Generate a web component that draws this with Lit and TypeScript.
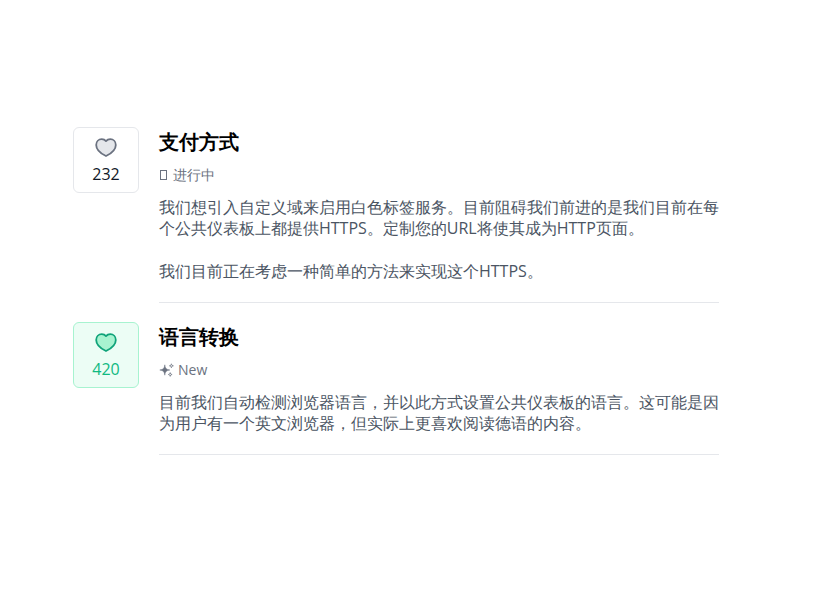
import { LitElement, html, css, svg } from "lit";
import { customElement } from "lit/decorators.js";

const heart = svg`<path d="M12 20 C 9.5 18.8 2.2 14.6 2.2 8.9 C 2.2 5.6 4.6 3.2 7.7 3.2 C 9.4 3.2 11 3.9 12 5.1 C 13 3.9 14.6 3.2 16.3 3.2 C 19.4 3.2 21.8 5.6 21.8 8.9 C 21.8 14.6 14.5 18.8 12 20 Z" stroke-width="1.8" stroke-linejoin="round"/>`;

@customElement("app-root")
export class AppRoot extends LitElement {
  static styles = css`
    :host { display: block; font-family: "Open Sans", sans-serif; background: #fff; min-height: 595px; box-sizing: border-box; padding: 127px 112px 0 73px; }
    .item { display: flex; gap: 20px; }
    .vote { flex: none; box-sizing: border-box; width: 66px; height: 66px; border: 1px solid #e5e7eb; border-radius: 6px; display: flex; flex-direction: column; align-items: center; padding-top: 8px; color: #111827; font-size: 16px; line-height: 20px; }
    .vote svg { width: 24px; height: 24px; fill: #e5e7eb; stroke: #6b7280; margin-bottom: 4px; display: block; }
    .vote.on { background: #ecfdf5; border-color: #a7f3d0; color: #10b981; }
    .vote.on svg { fill: #a7f3d0; stroke: #10a37a; }
    .body { flex: 1; border-bottom: 1px solid #e5e7eb; padding-bottom: 20px; margin-bottom: 19px; }
    h2 { margin: 0; font-size: 20px; line-height: 30px; font-weight: 700; color: #000; }
    .status { display: flex; align-items: center; gap: 3px; font-size: 14px; line-height: 20px; color: #6b7280; margin-top: 8px; }
    .missing { box-sizing: border-box; width: 7px; height: 10px; border: 1px solid #6b7280; margin: 0 3px 0 1px; }
    .status svg { width: 16px; height: 16px; fill: #6b7280; stroke: #6b7280; }
    p { margin: 0; font-size: 16px; line-height: 21px; color: #4b5563; }
    p + p { margin-top: 22px; }
    .text { margin-top: 12px; }
  `;

  render() {
    return html`
      <div class="item">
        <div class="vote"><svg viewBox="0 0 24 24">${heart}</svg>232</div>
        <div class="body">
          <h2>支付方式</h2>
          <div class="status"><span class="missing"></span>进行中</div>
          <div class="text">
            <p>我们想引入自定义域来启用白色标签服务。目前阻碍我们前进的是我们目前在每个公共仪表板上都提供HTTPS。定制您的URL将使其成为HTTP页面。</p>
            <p>我们目前正在考虑一种简单的方法来实现这个HTTPS。</p>
          </div>
        </div>
      </div>
      <div class="item">
        <div class="vote on"><svg viewBox="0 0 24 24">${heart}</svg>420</div>
        <div class="body">
          <h2>语言转换</h2>
          <div class="status"><svg viewBox="0 0 16 16"><path stroke-width="0.5" stroke-linejoin="round" d="M5.8 2.8 C6.2 6.4 7.2 7.4 10.8 8 C7.2 8.6 6.2 9.6 5.8 13.2 C5.4 9.6 4.4 8.6 0.8 8 C4.4 7.4 5.4 6.4 5.8 2.8Z"/><path fill="none" stroke-width="0.7" d="M12.4 1.8 L12.9 3.3 L14.4 3.8 L12.9 4.3 L12.4 5.8 L11.9 4.3 L10.4 3.8 L11.9 3.3Z M11.2 10.6 L11.7 12 L13.1 12.5 L11.7 13 L11.2 14.4 L10.7 13 L9.3 12.5 L10.7 12Z"/></svg>New</div>
          <div class="text">
            <p>目前我们自动检测浏览器语言，并以此方式设置公共仪表板的语言。这可能是因为用户有一个英文浏览器，但实际上更喜欢阅读德语的内容。</p>
          </div>
        </div>
      </div>
    `;
  }
}
